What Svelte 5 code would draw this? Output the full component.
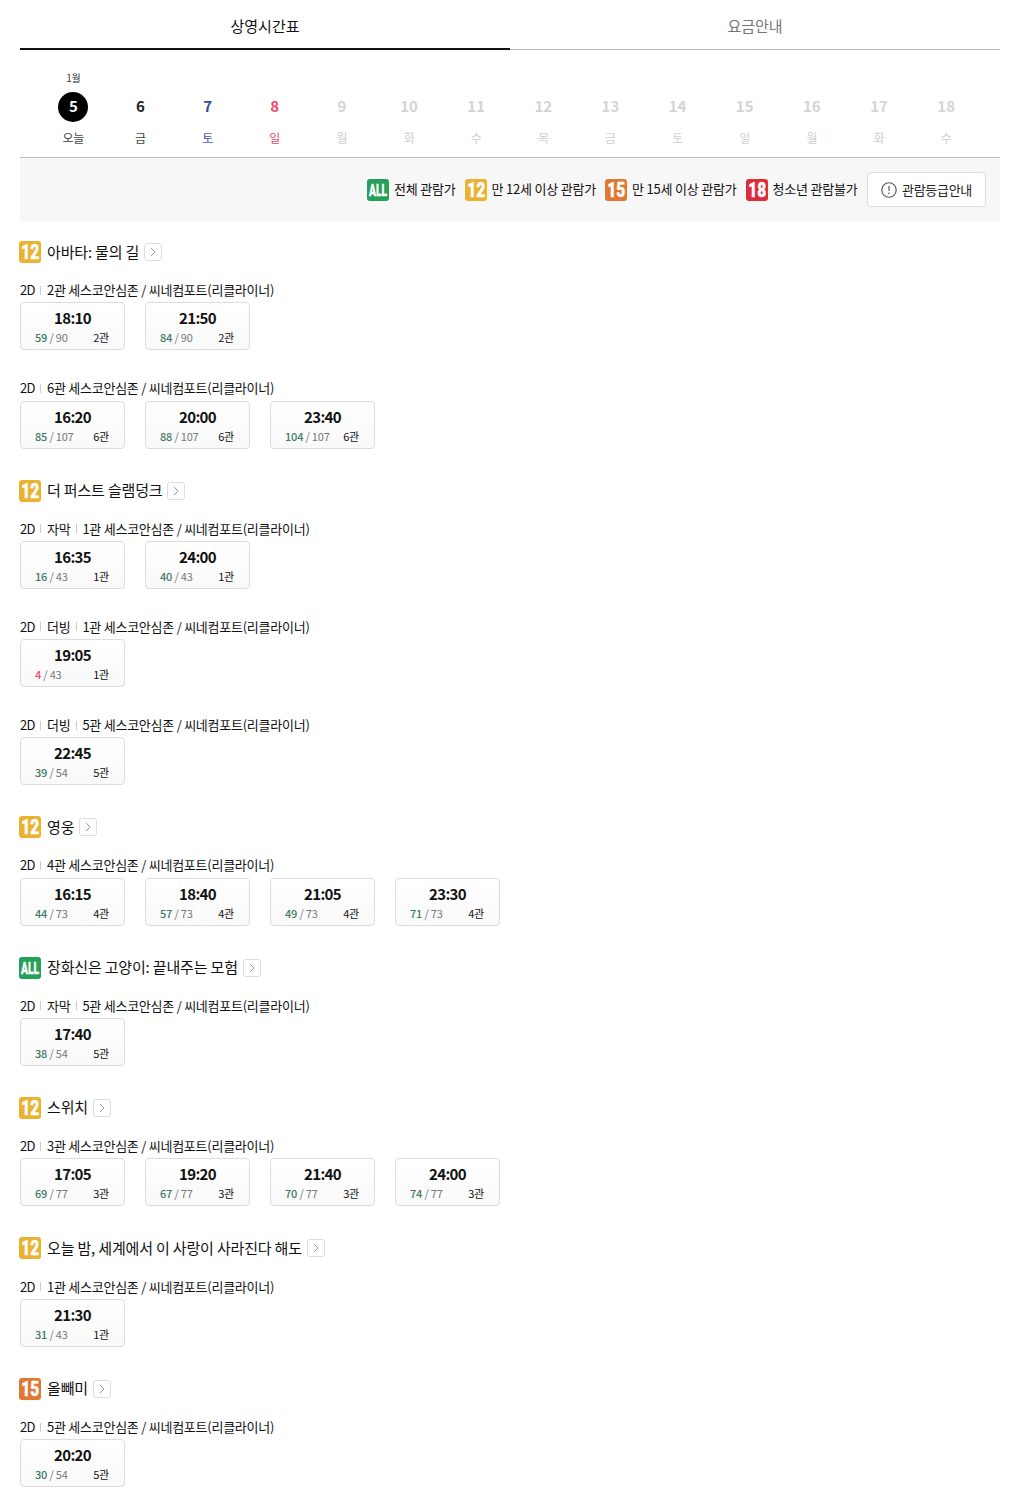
<script>
  const days = [
    ['5','오늘','today'],['6','금',''],['7','토','sat'],['8','일','sun'],['9','월','off'],['10','화','off'],['11','수','off'],
    ['12','목','off'],['13','금','off'],['14','토','off'],['15','일','off'],['16','월','off'],['17','화','off'],['18','수','off']
  ];
  const seat = '세스코안심존 / 씨네컴포트(리클라이너)';
  const movies = [
    { age:'12', title:'아바타: 물의 길', groups:[
      { tags:[], hall:'2관', total:90, shows:[['18:10',59],['21:50',84]] },
      { tags:[], hall:'6관', total:107, shows:[['16:20',85],['20:00',88],['23:40',104]] } ] },
    { age:'12', title:'더 퍼스트 슬램덩크', groups:[
      { tags:['자막'], hall:'1관', total:43, shows:[['16:35',16],['24:00',40]] },
      { tags:['더빙'], hall:'1관', total:43, shows:[['19:05',4]] },
      { tags:['더빙'], hall:'5관', total:54, shows:[['22:45',39]] } ] },
    { age:'12', title:'영웅', groups:[
      { tags:[], hall:'4관', total:73, shows:[['16:15',44],['18:40',57],['21:05',49],['23:30',71]] } ] },
    { age:'ALL', title:'장화신은 고양이: 끝내주는 모험', groups:[
      { tags:['자막'], hall:'5관', total:54, shows:[['17:40',38]] } ] },
    { age:'12', title:'스위치', groups:[
      { tags:[], hall:'3관', total:77, shows:[['17:05',69],['19:20',67],['21:40',70],['24:00',74]] } ] },
    { age:'12', title:'오늘 밤, 세계에서 이 사랑이 사라진다 해도', groups:[
      { tags:[], hall:'1관', total:43, shows:[['21:30',31]] } ] },
    { age:'15', title:'올빼미', groups:[
      { tags:[], hall:'5관', total:54, shows:[['20:20',30]] } ] }
  ];
  const legend = [['ALL','전체 관람가'],['12','만 12세 이상 관람가'],['15','만 15세 이상 관람가'],['18','청소년 관람불가']];
</script>

{#snippet badge(age)}
  <span class="badge a{age}"><span class="badge-num">{age}</span></span>
{/snippet}

<div class="page">
  <div class="tabs">
    <div class="tab active">상영시간표</div>
    <div class="tab">요금안내</div>
  </div>

  <div class="dates">
    {#each days as d, i}
      <div class="day {d[2]}">
        <div class="month">{i === 0 ? '1월' : ''}</div>
        <div class="num"><span>{d[0]}</span></div>
        <div class="dow">{d[1]}</div>
      </div>
    {/each}
  </div>

  <div class="legend">
    {#each legend as l}
      <div class="legend-item">{@render badge(l[0])}<span class="legend-text">{l[1]}</span></div>
    {/each}
    <div class="guide">
      <svg width="16" height="16" viewBox="0 0 16 16" fill="none"><circle cx="8" cy="8" r="7.2" stroke="#555" stroke-width="1.1"/><path d="M8 4v5" stroke="#555" stroke-width="1.2"/><path d="M8 10.6v1.4" stroke="#555" stroke-width="1.2"/></svg>
      <span>관람등급안내</span>
    </div>
  </div>

  <div class="list">
    {#each movies as m}
      <section class="movie">
        <div class="title">
          {@render badge(m.age)}
          <span class="name">{m.title}</span>
          <span class="more"><svg width="6" height="10" viewBox="0 0 6 10" fill="none"><path d="M1 1l4 4-4 4" stroke="#999" stroke-width="1"/></svg></span>
        </div>
        {#each m.groups as g}
          <div class="group">
            <div class="info">
              <span class="tag dim">2D</span>
              {#each g.tags as t}<span class="tag">{t}</span>{/each}
              <span>{g.hall} {seat}</span>
            </div>
            <div class="cards">
              {#each g.shows as s}
                <div class="card">
                  <div class="time">{s[0]}</div>
                  <div class="meta">
                    <span class="seats"><b class:low={s[1] < 10}>{s[1]}</b> / {g.total}</span>
                    <span class="hall">{g.hall}</span>
                  </div>
                </div>
              {/each}
            </div>
          </div>
        {/each}
      </section>
    {/each}
  </div>
</div>

<style>
  :global(body) { margin: 0; background: #fff; }
  .page {
    width: 980px; margin: 0 20px; color: #111;
    font-family: "Noto Sans CJK KR", "Noto Sans", sans-serif;
    font-size: 13px; letter-spacing: -0.25px;
  }
  .tabs { display: flex; height: 50px; }
  .tab {
    flex: 1; box-sizing: border-box; text-align: center; line-height: 52px; height: 50px;
    font-size: 15px; color: #777; border-bottom: 1px solid #bbb; letter-spacing: 0;
  }
  .tab.active { color: #111; border-bottom: 2px solid #111; }

  .dates { display: flex; padding: 0 20.25px 0 19.75px; height: 108px; box-sizing: border-box; border-bottom: 1px solid #bbb; }
  .day { flex: 1; text-align: center; color: #222; }
  .month { height: 20px; margin-top: 18px; font-size: 10px; line-height: 20px; color: #333; }
  .num { height: 30px; margin-top: 4px; display: flex; align-items: center; justify-content: center; font-size: 15px; font-weight: 700; letter-spacing: 0; }
  .num span { width: 30px; height: 30px; line-height: 28px; border-radius: 50%; }
  .today .num span { background: #000; color: #fff; }
  .dow { font-size: 12px; line-height: 18px; margin-top: 7px; color: #444; }
  .sat .num { color: #2e4aa8; } .sat .dow { color: #3f5bb5; }
  .sun .num { color: #f0476c; } .sun .dow { color: #f0476c; }
  .off .num { color: #d4d4d4; } .off .dow { color: #cfcfcf; }

  .legend {
    height: 63px; background: #f7f7f7; display: flex; align-items: center; justify-content: flex-end;
    padding: 0 14px 0 0; gap: 9.5px; box-sizing: border-box; letter-spacing: -0.2px;
  }
  .legend-item { display: flex; align-items: center; gap: 4.5px; color: #111; }
  .legend-text { margin-bottom: 2px; }
  .guide {
    width: 119px; height: 35px; box-sizing: border-box; background: #fff; border: 1px solid #ddd; border-radius: 4px;
    display: flex; align-items: center; justify-content: center; gap: 5px; color: #222; letter-spacing: -0.3px;
  }

  .badge {
    display: inline-flex; width: 22px; height: 22px; border-radius: 3px; flex: none;
    align-items: center; justify-content: center;
  }
  .badge-num {
    display: inline-block; font-family: "Roboto", sans-serif; font-weight: 900; color: #fff;
    font-size: 21px; line-height: 22px; letter-spacing: 0; transform: scaleX(0.74);
    -webkit-text-stroke: 0.4px #fff;
  }
  .aALL { background: #23a05a; }
  .aALL .badge-num { font-size: 17px; transform: scaleX(0.6); -webkit-text-stroke: 0.3px #fff; }
  .a12 { background: #ebb22f; }
  .a15 { background: #e07832; }
  .a18 { background: #dd2c3c; }

  .list { padding-top: 20px; }
  .movie { padding-bottom: 2.88px; }
  .title { display: flex; align-items: center; height: 22px; gap: 5px; margin-bottom: 17.45px; margin-left: -1px; font-size: 15px; letter-spacing: -0.17px; }
  .title > .badge { margin-right: 1px; }
  .name { color: #111; margin-bottom: 2px; }
  .more {
    width: 18px; height: 18px; box-sizing: border-box; border: 1px solid #ddd; border-radius: 3px;
    display: flex; align-items: center; justify-content: center; background: #fff;
  }
  .group { height: 98.1px; }
  .info { height: 19.8px; display: flex; align-items: center; font-size: 13px; line-height: 20px; color: #111; }
  .tag { display: inline-flex; align-items: center; }
  .tag.dim { letter-spacing: -0.6px; }
  .tag::after { content: ""; width: 1px; height: 9px; background: #ccc; margin: 0 5.5px; }
  .cards { display: flex; gap: 20px; margin-top: 2.2px; }
  .card {
    width: 105px; height: 48px; box-sizing: border-box; border: 1px solid #ddd; border-radius: 4px;
    background: linear-gradient(#fff, #f9f9f9); text-align: center; padding-top: 4px;
  }
  .time { font-size: 15px; line-height: 22px; font-weight: 700; color: #111; letter-spacing: -0.7px; }
  .meta { display: flex; justify-content: space-between; padding: 0 15px 0 14px; font-size: 11px; line-height: 16px; letter-spacing: -0.2px; }
  .seats { color: #777; }
  .seats b { font-weight: 500; color: #3f7a62; }
  .seats b.low { color: #f0476c; }
  .hall { color: #111; }
</style>
